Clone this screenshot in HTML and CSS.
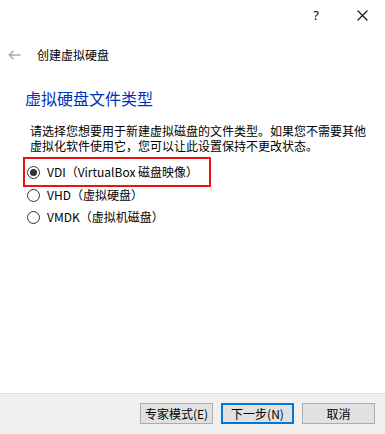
FILE: index.html
```html
<!DOCTYPE html>
<html lang="zh-CN">
<head>
    <meta charset="UTF-8">
    <title>创建虚拟硬盘</title>
    <link rel="stylesheet" href="styles.css">
</head>
<body>
    <div id="dialog">
        <div id="titlebar">
            <span class="tb-btn help">?</span>
            <span class="tb-btn">
                <svg width="11" height="11" viewBox="0 0 11 11"><path d="M0.5 0.5 L10.5 10.5 M10.5 0.5 L0.5 10.5" stroke="#111" stroke-width="1.1" fill="none"/></svg>
            </span>
        </div>
        <div id="nav">
            <svg class="back" width="13" height="10" viewBox="0 0 13 10"><path d="M12.5 5 H1.2 M5.5 0.8 L1.2 5 L5.5 9.2" stroke="#a8a8a8" stroke-width="1.3" fill="none"/></svg>
            <span>创建虚拟硬盘</span>
        </div>
        <h1 id="heading">虚拟硬盘文件类型</h1>
        <p id="desc">请选择您想要用于新建虚拟磁盘的文件类型。如果您不需要其他虚拟化软件使用它，您可以让此设置保持不更改状态。</p>
        <div id="options">
            <div class="option marked"><span class="radio checked"></span>VDI（VirtualBox 磁盘映像）</div>
            <div class="option"><span class="radio"></span>VHD（虚拟硬盘）</div>
            <div class="option last"><span class="radio"></span>VMDK（虚拟机磁盘）</div>
        </div>
        <div id="footer">
            <button class="btn">专家模式(E)</button>
            <button class="btn default">下一步(N)</button>
            <button class="btn">取消</button>
        </div>
    </div>
</body>
</html>
```

FILE: styles.css
```css
html, body{
    margin:0;
    padding:0;
    background:#fff;
}
body{
    font-family: "Noto Sans CJK SC", "Noto Sans", sans-serif;
    font-size:12px;
    color:#000;
}
#dialog{
    width:385px;
    height:434px;
    display:flex;
    flex-direction:column;
}
#titlebar{
    height:30px;
    display:flex;
    justify-content:flex-end;
}
.tb-btn{
    width:46px;
    height:30px;
    display:flex;
    align-items:center;
    justify-content:center;
}
.help{
    font-family: "Noto Sans", sans-serif;
    font-size:13px;
    padding-bottom:1px;
}
#nav{
    margin-top:17px;
    height:16px;
    line-height:16px;
    display:flex;
    align-items:center;
    padding-left:8px;
}
#nav .back{
    margin-right:16px;
}
#heading{
    margin:25px 0 0 25px;
    font-size:16px;
    font-weight:normal;
    line-height:20px;
    color:#0033bb;
}
#desc{
    margin:15px 0 0 30px;
    width:345px;
    line-height:15px;
}
#options{
    margin-top:4px;
    padding-left:23px;
    display:flex;
    flex-direction:column;
    align-items:flex-start;
}
.option{
    height:16px;
    line-height:16px;
    display:flex;
    align-items:center;
    padding-left:4px;
    white-space:nowrap;
}
.option.marked{
    height:26px;
    width:182px;
    padding-left:2px;
    border:2px solid #ee1111;
}
.option.last{
    margin-top:6px;
}
.radio{
    width:11px;
    height:11px;
    border:1px solid #333;
    border-radius:50%;
    margin-right:7px;
    display:flex;
    align-items:center;
    justify-content:center;
    flex-shrink:0;
}
.radio.checked::after{
    content:"";
    width:7px;
    height:7px;
    border-radius:50%;
    background:#333;
}
#footer{
    margin-top:auto;
    height:31px;
    padding:9px 10px 0 0;
    background:#f0f0f0;
    border-top:1px solid #dfdfdf;
    display:flex;
    justify-content:flex-end;
    align-items:flex-start;
    gap:8px;
}
.btn{
    width:73px;
    height:21px;
    margin:0;
    padding:0;
    background:#e1e1e1;
    border:1px solid #adadad;
    font-family: "Noto Sans CJK SC", sans-serif;
    font-size:12px;
    line-height:17px;
    color:#000;
}
.btn.default{
    border:2px solid #0078d7;
}
```
